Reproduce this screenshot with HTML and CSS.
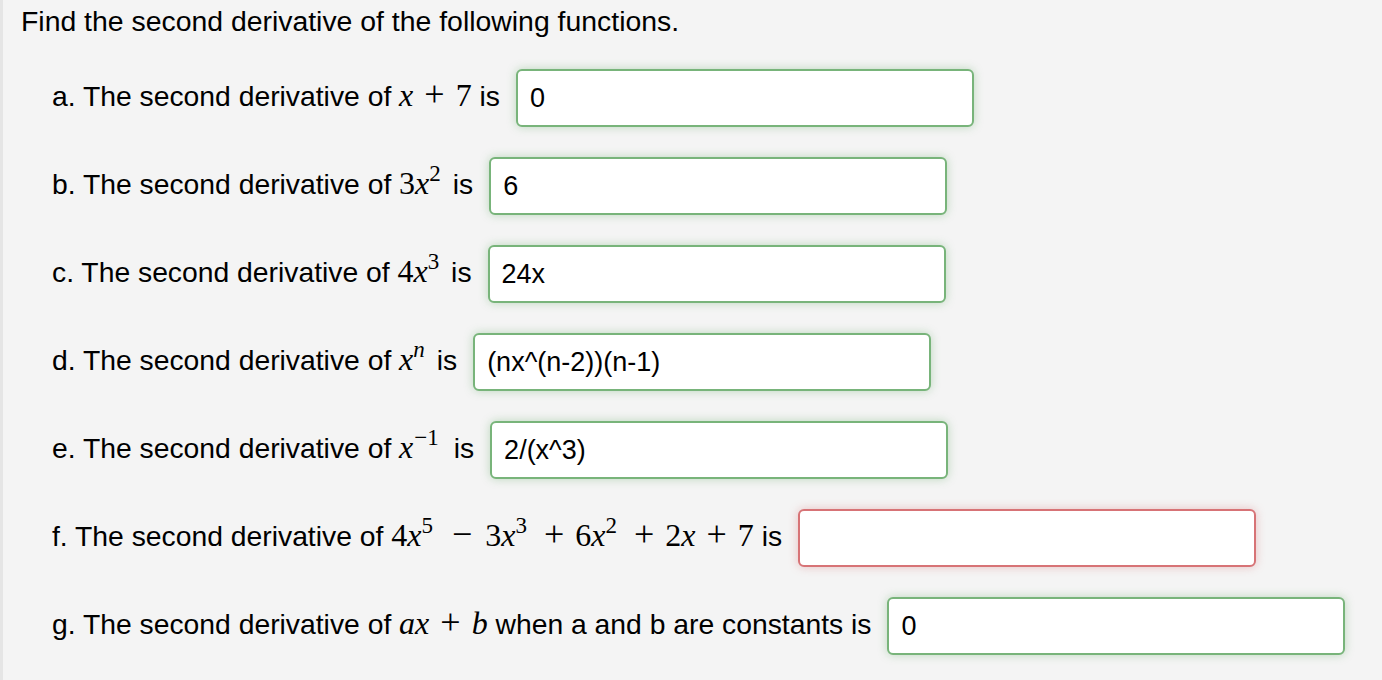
FILE: index.html
```html
<!DOCTYPE html>
<html>
<head>
<meta charset="utf-8">
<link rel="stylesheet" href="styles.css">
</head>
<body>
<div class="page">
  <p class="title">Find the second derivative of the following functions.</p>
  <div class="row">
    <span class="label">a. The second derivative of <span class="m"><i>x</i><span class="op">+</span>7</span> is</span>
    <input class="ans ok" type="text" value="0">
  </div>
  <div class="row">
    <span class="label">b. The second derivative of <span class="m">3<i>x</i><sup class="tight">2</sup></span> is</span>
    <input class="ans ok" type="text" value="6">
  </div>
  <div class="row">
    <span class="label">c. The second derivative of <span class="m">4<i>x</i><sup class="tight">3</sup></span> is</span>
    <input class="ans ok" type="text" value="24x">
  </div>
  <div class="row">
    <span class="label">d. The second derivative of <span class="m"><i>x</i><sup class="tight"><i>n</i></sup></span> is</span>
    <input class="ans ok" type="text" value="(nx^(n-2))(n-1)">
  </div>
  <div class="row">
    <span class="label">e. The second derivative of <span class="m"><i>x</i><sup class="wide">−1</sup></span> is</span>
    <input class="ans ok" type="text" value="2/(x^3)">
  </div>
  <div class="row">
    <span class="label">f. The second derivative of <span class="m">4<i>x</i><sup>5</sup><span class="op minus">−</span>3<i>x</i><sup>3</sup><span class="op">+</span>6<i>x</i><sup>2</sup><span class="op">+</span>2<i>x</i><span class="op">+</span>7</span> is</span>
    <input class="ans bad" type="text" value="">
  </div>
  <div class="row">
    <span class="label">g. The second derivative of <span class="m"><i>ax</i><span class="op">+</span><i>b</i></span> when a and b are constants is</span>
    <input class="ans ok" type="text" value="0">
  </div>
</div>
</body>
</html>
```

FILE: styles.css
```css
html, body {
  margin: 0;
  padding: 0;
  background: #f4f4f4;
}

.page {
  border-left: 3px solid #e5e5e5;
  padding-left: 18px;
  min-height: 680px;
  box-sizing: border-box;
  font-family: "Liberation Sans", Arial, sans-serif;
  color: #000;
}

.title {
  margin: 0;
  height: 54px;
  line-height: 42px;
  font-size: 28.4px;
}

.row {
  display: flex;
  align-items: center;
  height: 88px;
  padding-left: 31px;
}

.label {
  white-space: nowrap;
  line-height: 30px;
  font-size: 28.3px;
  padding-bottom: 5px;
}

.m {
  font-family: "Liberation Serif", "Times New Roman", serif;
  font-size: 32px;
}

.m i {
  font-style: italic;
}

.m sup {
  font-size: 23px;
  line-height: 0;
  vertical-align: 13px;
  margin-left: 0;
  margin-right: 6px;
}

.m sup.tight {
  margin-right: 4px;
}

.m sup.wide {
  margin-left: 1px;
  margin-right: 7px;
}

.op {
  font-size: 36px;
  line-height: 0;
  margin: 0 11px;
}

.op.minus {
  margin: 0 13px;
}

.ans {
  margin-left: 16px;
  width: 458px;
  height: 58px;
  box-sizing: border-box;
  border-radius: 6px;
  border: 2px solid #78b47a;
  background: #fff;
  padding: 0 12px;
  font-family: "Liberation Sans", Arial, sans-serif;
  font-size: 27px;
  color: #000;
  outline: none;
}

.ans.ok {
  border-color: #78b47a;
  box-shadow: 0 0 10px rgba(120, 180, 122, 0.45);
}

.ans.bad {
  border-color: #d77376;
  box-shadow: 0 0 10px rgba(215, 115, 118, 0.4);
}
```
